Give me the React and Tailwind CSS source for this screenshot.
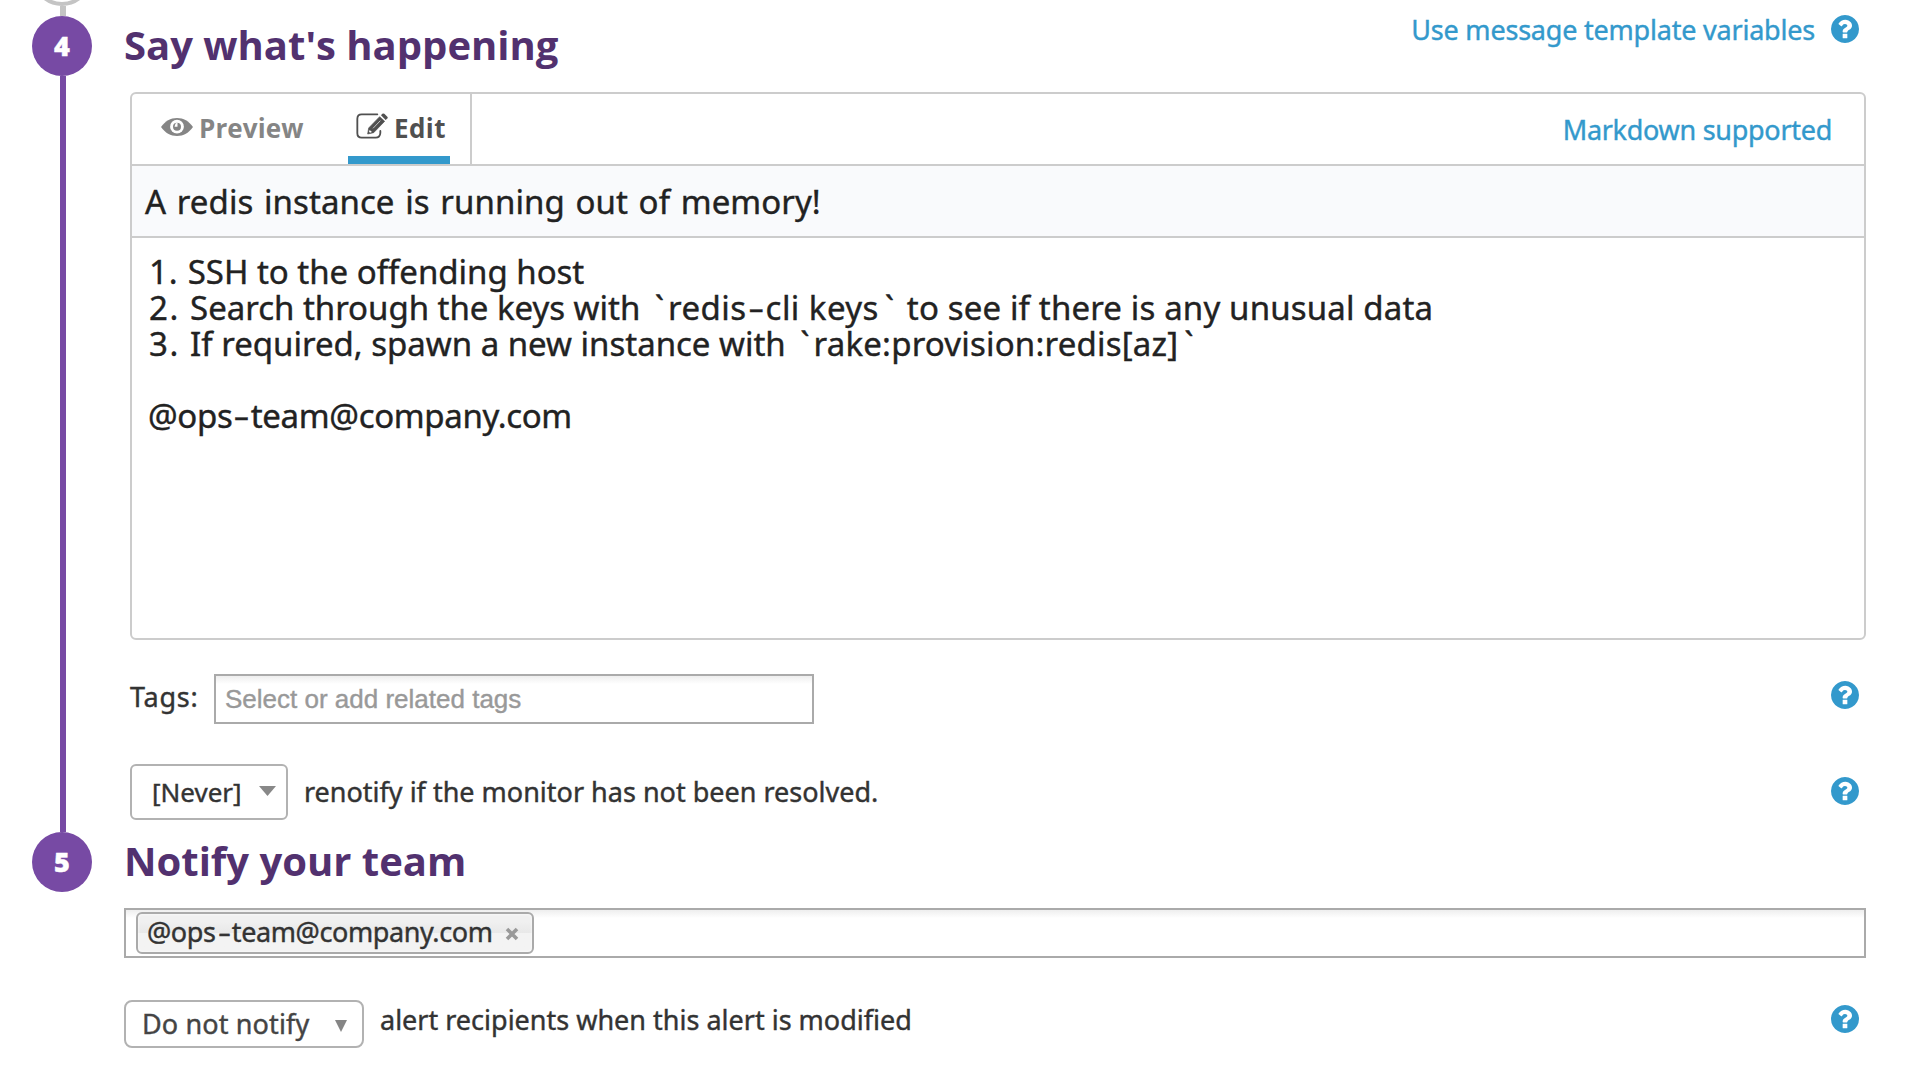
import React from "react";

function HelpIcon({ className = "" }) {
  return (
    <svg viewBox="128 128 1536 1536" className={`h-7 w-7 shrink-0 fill-[#3399cc] ${className}`}>
      <path d="M1024 1376v-192q0-14-9-23t-23-9h-192q-14 0-23 9t-9 23v192q0 14 9 23t23 9h192q14 0 23-9t9-23zm256-672q0-88-55.5-163t-138.5-116-170-41q-243 0-371 213-15 24 8 42l132 100q7 6 19 6 16 0 25-12 53-68 86-92 34-24 86-24 48 0 85.5 26t37.5 59q0 38-20 61t-68 45q-63 28-115.5 86.5t-52.5 125.5v36q0 14 9 23t23 9h192q14 0 23-9t9-23q0-19 21.5-49.5t54.5-49.5q32-18 49-28.5t46-35 44.5-48 28-60.5 12.5-81zm384 192q0 209-103 385.5t-279.5 279.5-385.5 103-385.5-103-279.5-279.5-103-385.5 103-385.5 279.5-279.5 385.5-103 385.5 103 279.5 279.5 103 385.5z" />
    </svg>
  );
}

function EyeIcon() {
  return (
    <svg viewBox="0 0 32 18" className="h-[18px] w-8 shrink-0">
      <path d="M0 9C4 3.2 9.6 0 16 0s12 3.2 16 9c-4 5.8-9.600 9-16 9S4 14.800 0 9z" fill="#858585" />
      <circle cx="16" cy="8.700" r="6.900" fill="#fff" />
      <circle cx="16" cy="8.700" r="4" fill="#858585" />
      <path d="M14.500 5.500L16.500 4.500V8.700H13.500Z" fill="#fff" />
    </svg>
  );
}

function EditIcon() {
  return (
    <svg viewBox="0 0 96 78" className="h-[26px] w-8 shrink-0">
      <path d="M64 4H17Q4 4 4 17V61Q4 74 17 74H59Q72 74 73 60V54" fill="none" stroke="#505050" strokeWidth="5.500" strokeLinecap="round" />
      <path d="M35 63L38 45L71 11L86 25L53 59Z" fill="#505050" stroke="#505050" strokeWidth="2" strokeLinejoin="round" />
      <path d="M75 7L79 2.500Q82 0 85 2.500L94 11Q96.500 14 94 16.500L89 21Z" fill="#505050" />
      <path d="M51 46L73 23" stroke="#fff" strokeWidth="2" />
      <path d="M41 51L48 57L42 59L39 56Z" fill="#fff" />
    </svg>
  );
}

function StepBadge({ children }) {
  return (
    <div className="flex h-[60px] w-[60px] shrink-0 items-center justify-center rounded-full bg-[#774aa4] font-['Open_Sans',sans-serif] text-[27px] font-extrabold text-white">
      {children}
    </div>
  );
}

function StepRail() {
  return (
    <aside className="ml-8 flex w-[92px] shrink-0 flex-col">
      <div className="flex h-4 flex-col justify-end overflow-hidden">
        <div className="h-[60px] w-[60px] shrink-0 rounded-full border-[4px] border-[#c4c4c4]" />
        <div className="ml-7 h-[10px] w-[6px] shrink-0 bg-[#c4c4c4]" />
      </div>
      <StepBadge>4</StepBadge>
      <div className="ml-7 h-[756px] w-[6px] shrink-0 bg-[#774aa4]" />
      <StepBadge>5</StepBadge>
    </aside>
  );
}

const Hyphen = () => <span className="mx-1 inline-block scale-x-150">-</span>;
const Tick = () => <span className="pr-1 pl-[6px]">`</span>;

function Editor() {
  return (
    <section className="ml-[6px] h-[548px] w-[1736px] overflow-hidden rounded-md border-2 border-[#ccc]">
      <div className="flex h-[72px] justify-between border-b-2 border-[#ccc]">
        <nav className="flex w-[340px] border-r-2 border-[#ccc] font-['Open_Sans',sans-serif] text-[26px] leading-[69px] font-bold [-webkit-text-stroke:0px]">
          <div className="flex w-[216px] pl-[29px] text-[#858585]">
            <div className="mt-6"><EyeIcon /></div>
            <span className="ml-[6px] tracking-[0.12px]">Preview</span>
          </div>
          <div className="flex w-[102px] border-b-8 border-[#3399cc] pl-2 text-[#505050]">
            <div className="mt-[19px]"><EditIcon /></div>
            <span className="ml-[6px] tracking-[0.4px]">Edit</span>
          </div>
        </nav>
        <a className="pr-8 text-[27px] leading-[72px] tracking-[-0.284px] text-[#3399cc]">Markdown supported</a>
      </div>
      <div className="h-[72px] border-b-2 border-[#ccc] bg-[#f9fafc] pl-[13px] text-[33px] leading-[72px] tracking-[0.07px] [word-spacing:2px] text-[#222]">
        A redis instance is running out of memory!
      </div>
      <div className="pt-4 pl-[17px] text-[33px] leading-9 whitespace-pre text-[#222]">
        <p className="tracking-[-0.02px]"><span className="tracking-[0.8px]">1. </span>SSH to the offending host</p>
        <p className="tracking-[-0.03px]">
          <span className="tracking-[1.6px]">2. </span>Search through the keys with <Tick />
          <span className="tracking-[0.45px]">redis<Hyphen />cli keys</span><Tick />
          <span className="tracking-[0.15px]"> to see if there is any unusual data</span>
        </p>
        <p className="tracking-[-0.01px]">
          <span className="tracking-[1.6px]">3. </span>If required, spawn a new instance with <Tick />
          <span className="tracking-[0.2px]">rake:provision:redis[az]</span><Tick />
        </p>
        <p className="mt-9 -ml-px tracking-[-0.33px]">@ops<Hyphen />team@company.com</p>
      </div>
    </section>
  );
}

export default function App() {
  return (
    <div className="flex h-[1076px] w-[1916px] overflow-hidden bg-white font-['Noto_Sans',sans-serif] text-[27px] text-[#333] [-webkit-text-stroke:0.4px]">
      <StepRail />
      <main className="flex w-[1742px] flex-col">
        <header className="flex h-[92px] justify-between">
          <h2 className="pt-[15px] font-['Open_Sans',sans-serif] text-[40px] leading-[60px] font-bold text-[#52316f] [-webkit-text-stroke:0px]">Say what's happening</h2>
          <div className="flex pr-[7px]">
            <a className="pt-[10px] leading-10 tracking-[-0.211px] text-[#3399cc]">Use message template variables</a>
            <HelpIcon className="mt-[15px] ml-4" />
          </div>
        </header>

        <Editor />

        <div className="mt-[34px] ml-[6px] flex h-[50px]">
          <label className="w-[84px] leading-[46px] tracking-[0.74px]">Tags:</label>
          <div className="h-[50px] w-[600px] border-2 border-[#aaa] bg-linear-to-b from-[#eee] to-white to-[8px] pl-[9px] font-['Liberation_Sans',sans-serif] text-[26px] leading-[47px] text-[#999]">
            Select or add related tags
          </div>
          <HelpIcon className="mt-[7px] mr-[7px] ml-auto" />
        </div>

        <div className="mt-10 ml-[6px] flex h-14">
          <div className="flex w-[158px] rounded-md border-2 border-[#b2b2b2] pl-5 text-[26px] leading-[52px]">
            [Never]
            <svg viewBox="0 0 17 10" className="mt-5 ml-[17px] h-[10px] w-[17px] fill-[#888]"><path d="M0 0H17L8.500 10Z" /></svg>
          </div>
          <span className="ml-4 leading-[55px]">renotify if the monitor has not been resolved.</span>
          <HelpIcon className="mt-[13px] mr-[7px] ml-auto" />
        </div>

        <h2 className="h-[88px] pt-[11px] font-['Open_Sans',sans-serif] text-[40px] leading-[60px] font-bold text-[#52316f] [-webkit-text-stroke:0px]">Notify your team</h2>

        <div className="flex h-[50px] border-2 border-[#aaa] bg-linear-to-b from-[#eee] to-white to-[8px]">
          <div className="mt-[2px] ml-[10px] flex h-[42px] w-[398px] rounded-md border-2 border-[#aaa] bg-linear-to-b from-[#f0f0f0] from-20% via-[#e8e8e8] via-50% to-[#f3f3f3] to-50% pl-[9px] leading-9 tracking-[-0.4px] inset-shadow-[0_0_3px_#fff]">
            <span>@ops<Hyphen />team@company.com</span>
            <svg viewBox="0 0 14 14" className="mt-[13px] mr-[13px] ml-auto h-[14px] w-[14px]"><path d="M2 2L12 12M12 2L2 12" stroke="#999" strokeWidth="3.600" /></svg>
          </div>
        </div>

        <div className="mt-[42px] flex h-12">
          <div className="flex w-60 rounded-lg border-2 border-[#b2b2b2] pl-4 leading-[44px] tracking-[0.127px] text-[#444]">
            Do not notify
            <svg viewBox="0 0 12 12" className="mt-[18px] ml-[26px] h-3 w-3 fill-[#858585]"><path d="M0 0H12L6 12Z" /></svg>
          </div>
          <span className="ml-4 leading-10">alert recipients when this alert is modified</span>
          <HelpIcon className="mt-[5px] mr-[7px] ml-auto" />
        </div>
      </main>
    </div>
  );
}
